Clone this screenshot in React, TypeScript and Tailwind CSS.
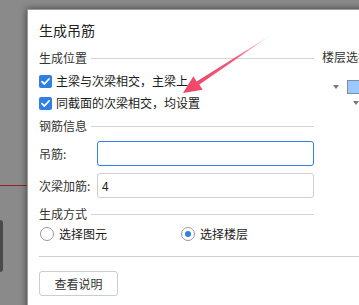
import React from "react";

const font = { fontFamily: '"Noto Sans CJK SC", "Noto Sans", sans-serif' };

const GroupTitle = ({ title }: { title: string }) => (
  <div className="flex items-center h-4">
    <span className="text-[12px] leading-4 text-[#333]">{title}</span>
    <div className="flex-1 ml-1 h-px bg-[#d4d4d4]" />
  </div>
);

const CheckBox = () => (
  <div className="w-[13px] h-[13px] rounded-[2px] bg-[#2f7fe4] flex items-center justify-center shrink-0">
    <svg width="11" height="11" viewBox="0 0 11 11">
      <path d="M2 5.6 L4.4 8 L9 3" fill="none" stroke="#fff" strokeWidth="1.8" strokeLinecap="round" strokeLinejoin="round" />
    </svg>
  </div>
);

const Radio = ({ checked }: { checked?: boolean }) => (
  <div className="w-[14px] h-[14px] rounded-full border border-[#9a9a9a] bg-white flex items-center justify-center shrink-0">
    {checked && <div className="w-[6px] h-[6px] rounded-full bg-[#2f7fe4]" />}
  </div>
);

const Caret = () => (
  <svg width="6" height="4" viewBox="0 0 6 4" className="shrink-0">
    <path d="M0 0 L6 0 L3 4 Z" fill="#777" />
  </svg>
);

export default function App() {
  return (
    <div className="relative w-[359px] h-[305px] overflow-hidden bg-[#8a8a8a]" style={font}>
      {/* things behind the dialog */}
      <div className="absolute left-0 top-[185px] w-[40px] h-px bg-[#8e2424]" />
      <div className="absolute left-[-40px] top-[220px] w-[43px] h-[52px] rounded-[3px] bg-[#4a4a4a]" />

      {/* dialog */}
      <div className="absolute left-[27px] top-[9px] w-[420px] h-[320px] bg-white border-t border-l border-[#9c9c9c] shadow-[0_0_7px_rgba(0,0,0,0.55)] pl-[11px] pt-[10px]">
        <div className="text-[14px] leading-5 text-[#222]">生成吊筋</div>

        <div className="flex mt-[10px]">
          <div className="w-[275px] flex flex-col">
            <GroupTitle title="生成位置" />
            <div className="mt-1 flex flex-col">
              <div className="h-[22px] flex items-center gap-[4px]">
                <CheckBox />
                <span className="text-[12px] text-[#1a1a1a] leading-4">主梁与次梁相交，主梁上</span>
              </div>
              <div className="h-[22px] flex items-center gap-[4px]">
                <CheckBox />
                <span className="text-[12px] text-[#1a1a1a] leading-4">同截面的次梁相交，均设置</span>
              </div>
            </div>

            <div className="mt-1">
              <GroupTitle title="钢筋信息" />
            </div>
            <div className="mt-[7px] flex items-center">
              <span className="w-[58px] text-[12px] text-[#333] leading-4">吊筋:</span>
              <div className="flex-1 h-[25px] rounded-[3px] border border-[#2f7fe4]" />
            </div>
            <div className="mt-[7px] flex items-center">
              <span className="w-[58px] text-[12px] text-[#333] leading-4">次梁加筋:</span>
              <div className="flex-1 h-[25px] rounded-[3px] border border-[#cfcfcf] flex items-center px-[4px] text-[12px] text-[#222]">
                4
              </div>
            </div>

            <div className="mt-2">
              <GroupTitle title="生成方式" />
            </div>
            <div className="mt-px h-[22px] flex items-center">
              <div className="w-[142px] flex items-center gap-[5px] pl-px">
                <Radio />
                <span className="text-[12px] text-[#1a1a1a] leading-4">选择图元</span>
              </div>
              <div className="flex items-center gap-[5px]">
                <Radio checked />
                <span className="text-[12px] text-[#1a1a1a] leading-4">选择楼层</span>
              </div>
            </div>
          </div>

          <div className="ml-[8px] flex flex-col">
            <div className="text-[12px] leading-4 text-[#333] -mt-px whitespace-nowrap">楼层选择</div>
            <div className="mt-[15px] h-[14px] flex items-center pl-[11px] gap-[8px]">
              <Caret />
              <div className="w-[14px] h-[14px] border border-[#7a8ea8] bg-[#9cc9fb]" />
            </div>
            <div className="mt-[6px] h-[6px] flex items-center pl-[31px]">
              <Caret />
            </div>
          </div>
        </div>

        <div className="mt-[11px] h-px bg-[#d0d0d0]" />

        <button className="mt-[14px] w-[79px] h-[25px] rounded-[3px] border border-[#cdcdcd] bg-white text-[12px] text-[#333] leading-4">
          查看说明
        </button>
      </div>

      {/* red annotation arrow */}
      <svg className="absolute left-0 top-0 pointer-events-none" width="359" height="305" viewBox="0 0 359 305">
        <defs>
          <linearGradient id="ar" x1="270" y1="35" x2="183" y2="93" gradientUnits="userSpaceOnUse">
            <stop offset="0" stopColor="#f36b86" stopOpacity="0.2" />
            <stop offset="0.4" stopColor="#f25a78" />
            <stop offset="1" stopColor="#ef4468" />
          </linearGradient>
        </defs>
        <path d="M271 35 L196.6 81.6 L193.4 76.2 L183 93 L202.6 89.8 L199.4 84.4 Z" fill="url(#ar)" />
      </svg>
    </div>
  );
}
